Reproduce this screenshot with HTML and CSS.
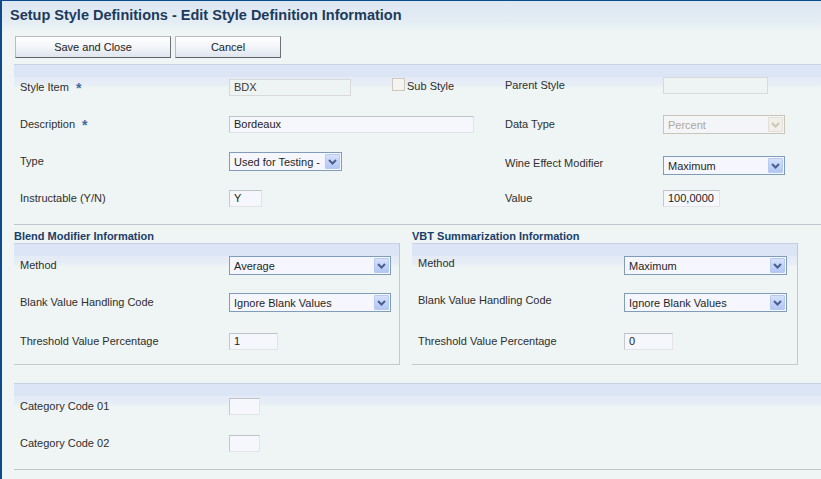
FILE: index.html
```html
<!DOCTYPE html>
<html lang="en">
<head>
<meta charset="utf-8">
<title>Setup Style Definitions</title>
<link rel="stylesheet" href="styles.css">
</head>
<body>
<div class="window">
  <div class="titlebar">Setup Style Definitions - Edit Style Definition Information</div>
  <div class="toolbar">
    <button class="btn btn-save" type="button">Save and Close</button>
    <button class="btn btn-cancel" type="button">Cancel</button>
  </div>

  <div class="section section-main">
    <div class="form-grid">
      <div class="label">Style Item <span class="req">*</span></div>
      <div class="field"><div class="input disabled w-style">BDX</div></div>
      <div class="field sub"><span class="checkbox"></span><span class="sub-label">Sub Style</span></div>
      <div class="label r-label up2">Parent Style</div>
      <div class="field up2"><div class="input disabled w-parent"></div></div>

      <div class="label">Description <span class="req">*</span></div>
      <div class="field span2"><div class="input w-desc">Bordeaux</div></div>
      <div class="label r-label">Data Type</div>
      <div class="field"><div class="select disabled w-sel122"><span class="sel-text">Percent</span><span class="arrow"><svg width="9" height="6" viewBox="0 0 9 6"><path d="M1 1 L4.5 4.5 L8 1" fill="none" stroke="currentColor" stroke-width="2"/></svg></span></div></div>

      <div class="label">Type</div>
      <div class="field span2"><div class="select w-type"><span class="sel-text">Used for Testing -</span><span class="arrow"><svg width="9" height="6" viewBox="0 0 9 6"><path d="M1 1 L4.5 4.5 L8 1" fill="none" stroke="currentColor" stroke-width="2"/></svg></span></div></div>
      <div class="label r-label down2">Wine Effect Modifier</div>
      <div class="field down3"><div class="select w-sel122"><span class="sel-text">Maximum</span><span class="arrow"><svg width="9" height="6" viewBox="0 0 9 6"><path d="M1 1 L4.5 4.5 L8 1" fill="none" stroke="currentColor" stroke-width="2"/></svg></span></div></div>

      <div class="label">Instructable (Y/N)</div>
      <div class="field span2"><div class="input w-yn">Y</div></div>
      <div class="label r-label">Value</div>
      <div class="field"><div class="input w-value">100,0000</div></div>
    </div>
  </div>

  <div class="groups">
    <div class="group group-blend">
      <div class="group-title">Blend Modifier Information</div>
      <div class="group-box">
        <div class="box-grid">
          <div class="label">Method</div>
          <div class="field"><div class="select w-sel162"><span class="sel-text">Average</span><span class="arrow"><svg width="9" height="6" viewBox="0 0 9 6"><path d="M1 1 L4.5 4.5 L8 1" fill="none" stroke="currentColor" stroke-width="2"/></svg></span></div></div>
          <div class="label">Blank Value Handling Code</div>
          <div class="field"><div class="select w-sel162"><span class="sel-text">Ignore Blank Values</span><span class="arrow"><svg width="9" height="6" viewBox="0 0 9 6"><path d="M1 1 L4.5 4.5 L8 1" fill="none" stroke="currentColor" stroke-width="2"/></svg></span></div></div>
          <div class="label">Threshold Value Percentage</div>
          <div class="field"><div class="input w-thresh">1</div></div>
        </div>
      </div>
    </div>
    <div class="group group-vbt">
      <div class="group-title">VBT Summarization Information</div>
      <div class="group-box">
        <div class="box-grid">
          <div class="label up2">Method</div>
          <div class="field"><div class="select w-sel163"><span class="sel-text">Maximum</span><span class="arrow"><svg width="9" height="6" viewBox="0 0 9 6"><path d="M1 1 L4.5 4.5 L8 1" fill="none" stroke="currentColor" stroke-width="2"/></svg></span></div></div>
          <div class="label up2">Blank Value Handling Code</div>
          <div class="field"><div class="select w-sel163"><span class="sel-text">Ignore Blank Values</span><span class="arrow"><svg width="9" height="6" viewBox="0 0 9 6"><path d="M1 1 L4.5 4.5 L8 1" fill="none" stroke="currentColor" stroke-width="2"/></svg></span></div></div>
          <div class="label">Threshold Value Percentage</div>
          <div class="field"><div class="input w-thresh">0</div></div>
        </div>
      </div>
    </div>
  </div>

  <div class="section section-cat">
    <div class="cat-grid">
      <div class="label">Category Code 01</div>
      <div class="field"><div class="input w-cat"></div></div>
      <div class="label">Category Code 02</div>
      <div class="field"><div class="input w-cat"></div></div>
    </div>
  </div>
</div>
</body>
</html>
```
FILE: styles.css
```css
* { box-sizing: border-box; }

html, body {
  margin: 0;
  padding: 0;
  height: 100%;
}

body {
  background: #eef5f4;
  font-family: "Liberation Sans", Arial, sans-serif;
  font-size: 11px;
  color: #2e2e2e;
  overflow: hidden;
}

.window {
  min-height: 100%;
  border-left: 2px solid #0b4a8c;
  border-top: 1px solid #0b4a8c;
}

.titlebar {
  height: 29px;
  line-height: 29px;
  padding-left: 8px;
  font-weight: bold;
  font-size: 14.5px;
  color: #1d3a5a;
  background: linear-gradient(to bottom, #dde7f2 0%, #e4edf4 70%, #ebf3f5 100%);
}

.toolbar {
  display: flex;
  gap: 4px;
  padding: 6px 0 0 13px;
  height: 34px;
}

.btn {
  height: 22px;
  padding: 0;
  font-family: "Liberation Sans", Arial, sans-serif;
  font-size: 11px;
  color: #222;
  background: linear-gradient(to bottom, #ffffff 0%, #f4f6fa 45%, #dfe5ee 100%);
  border: 1px solid #b8bcc2;
  border-right-color: #6f7378;
  border-bottom-color: #5f6368;
  border-radius: 0;
}

.btn-save { width: 156px; }
.btn-cancel { width: 106px; }

.section {
  margin-left: 12px;
  background: linear-gradient(to bottom,
    #c8d2e3 0px, #c8d2e3 1px,
    #dbe5f5 1px, #dbe5f5 13px,
    #e4ebf6 13px, #e6edf6 20px,
    #eef5f4 24px, #eef5f4 100%);
  border-bottom: 1px solid #bfc5c8;
  padding: 5px 0 7px 6px;
}

.form-grid {
  display: grid;
  grid-template-columns: 209px 163px 113px 158px 1fr;
  grid-auto-rows: 37px;
  align-items: center;
}

.label {
  white-space: nowrap;
  line-height: 13px;
}

.req {
  color: #3b6aa4;
  margin-left: 4px;
  font-size: 14px;
  font-weight: bold;
  line-height: 0;
  position: relative;
  top: 2px;
}

.field {
  display: flex;
  align-items: center;
}

.span2 { grid-column: span 2; }

.up2 { position: relative; top: -2px; }
.down2 { position: relative; top: 2px; }
.down3 { position: relative; top: 4px; }

.sub { align-self: start; padding-top: 9px; }

.checkbox {
  display: inline-block;
  width: 13px;
  height: 13px;
  border: 1px solid #cfc9bd;
  background: #f4f5f1;
  margin-right: 2px;
}

.sub-label { line-height: 13px; position: relative; top: 2px; }

.input {
  height: 17px;
  line-height: 15px;
  padding: 0 4px;
  background: #f6f7fc;
  border: 1px solid #e3e4e8;
  border-top-color: #bfc2c6;
  border-left-color: #c5c8cc;
  color: #222;
  white-space: nowrap;
  overflow: hidden;
}

.input.disabled {
  background: #eef3f4;
  border-color: #d8dada;
  color: #3a3a3a;
}

.select {
  position: relative;
  height: 19px;
  display: flex;
  align-items: center;
  background: #f6f7fe;
  border: 1px solid #7f9db9;
  color: #1f1f1f;
}

.sel-text {
  flex: 1;
  padding-left: 4px;
  white-space: nowrap;
  overflow: hidden;
}

.arrow {
  width: 15px;
  height: 15px;
  margin-right: 1px;
  display: flex;
  align-items: center;
  justify-content: center;
  background: linear-gradient(to bottom, #d7e2fb 0%, #c3d4f8 50%, #b3c7f4 100%);
  border: 1px solid #b8c9ef;
  border-radius: 1px;
  color: #4c5f8c;
}

.select.disabled {
  background: #f4f5f9;
  border-color: #c9c5b8;
  color: #aca899;
}

.select.disabled .arrow {
  background: #f0efe9;
  border-color: #e2e0d8;
  color: #cbc8bb;
}

.w-style { width: 122px; }
.w-parent { width: 105px; }
.w-desc { width: 245px; }
.w-type { width: 113px; }
.w-yn { width: 33px; }
.w-value { width: 57px; }
.w-sel122 { width: 122px; }
.w-sel162 { width: 162px; }
.w-sel163 { width: 163px; }
.w-thresh { width: 49px; }
.w-cat { width: 31px; }

.groups {
  display: flex;
  gap: 12px;
  margin-left: 12px;
  padding-top: 5px;
  margin-bottom: 18px;
}

.group-blend { width: 386px; }
.group-vbt { width: 386px; }

.group-title {
  height: 13px;
  line-height: 13px;
  font-weight: bold;
  font-size: 11px;
  color: #1b3e68;
  white-space: nowrap;
}

.group-box {
  height: 122px;
  border-right: 1px solid #c5c9cc;
  border-bottom: 1px solid #c5c9cc;
  background: linear-gradient(to bottom,
    #c8d2e3 0px, #c8d2e3 1px,
    #dbe5f5 1px, #dbe5f5 13px,
    #e4ebf6 13px, #e6edf6 20px,
    #eef5f4 24px, #eef5f4 100%);
  padding: 4px 0 0 6px;
}

.box-grid {
  display: grid;
  grid-template-columns: 209px 1fr;
  grid-template-rows: 37px 37px 40px;
  align-items: center;
}

.group-vbt .box-grid { grid-template-columns: 206px 1fr; }

.cat-grid {
  display: grid;
  grid-template-columns: 209px 1fr;
  grid-auto-rows: 37px;
  align-items: center;
}
```
